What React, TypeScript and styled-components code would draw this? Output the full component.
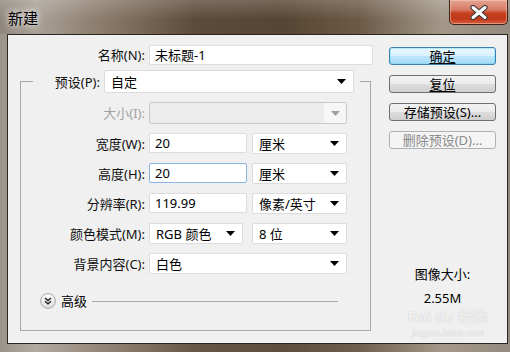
import React from "react";
import styled, { createGlobalStyle, css } from "styled-components";

const GlobalStyle = createGlobalStyle`
  html, body { margin: 0; padding: 0; }
  body {
    width: 510px;
    height: 352px;
    overflow: hidden;
    background: #5e4d3c;
    font-family: "Noto Sans", "Noto Sans CJK SC", sans-serif;
    font-size: 13px;
    color: #000;
  }
`;

const Window = styled.div`
  width: 514px;
  height: 352px;
  display: flex;
  flex-direction: column;
  background:
    linear-gradient(180deg, rgba(255,255,255,0.18) 0px, rgba(255,255,255,0) 20px),
    linear-gradient(90deg, #8f877d 0%, #a9a197 7%, #8a7b6a 20%, #5d4b3a 38%, #574533 55%, #6c5a47 70%, #a39888 86%, #948a7e 100%);
`;

const TitleBar = styled.div`
  height: 34px;
  flex: none;
  display: flex;
  align-items: flex-start;
`;

const Title = styled.div`
  padding: 9px 0 0 8px;
  font-size: 15px;
  line-height: 18px;
  color: #000;
  text-shadow: 0 0 6px rgba(255, 255, 255, 0.85), 0 0 10px rgba(255, 255, 255, 0.6);
`;

const CloseButton = styled.div`
  margin-left: auto;
  margin-right: 6px;
  width: 59px;
  height: 25px;
  box-sizing: border-box;
  border: 1px solid #3f2118;
  border-top: none;
  border-radius: 0 0 5px 5px;
  background: linear-gradient(180deg, #e4a393 0%, #d87c66 40%, #c5401f 55%, #c23a1c 80%, #d6603f 100%);
  box-shadow: inset 0 0 0 1px rgba(255, 220, 200, 0.45);
  display: flex;
  align-items: center;
  justify-content: center;
`;

const Frame = styled.div`
  flex: 1;
  display: flex;
  padding: 0 6px 8px 7px;
  background: linear-gradient(90deg, rgba(255,255,255,0.1), rgba(0,0,0,0));
`;

const Client = styled.div`
  flex: 1;
  position: relative;
  display: flex;
  border: 1px solid #2c2622;
  background: #f0f0f0;
  padding-top: 10px;
`;

const FormColumn = styled.div`
  display: flex;
  flex-direction: column;
`;

const NameRow = styled.div`
  display: flex;
  align-items: center;
  gap: 4px;
`;

const Label = styled.label<{ $width?: number; $disabled?: boolean }>`
  ${(p) => p.$width && css`width: ${p.$width}px;`}
  text-align: right;
  white-space: nowrap;
  line-height: 16px;
  color: ${(p) => (p.$disabled ? "#a3a3a3" : "#111")};
`;

const TextBox = styled.div<{ $width: number; $focused?: boolean }>`
  width: ${(p) => p.$width}px;
  height: 20px;
  box-sizing: border-box;
  background: #fff;
  border: 1px solid ${(p) => (p.$focused ? "#86b6e3" : "#dcdcdc")};
  border-radius: 2px;
  padding-left: 5px;
  display: flex;
  align-items: center;
  line-height: 16px;
`;

const Select = styled.div<{ $width: number; $height?: number; $disabled?: boolean }>`
  width: ${(p) => p.$width}px;
  height: ${(p) => p.$height ?? 20}px;
  box-sizing: border-box;
  background: ${(p) => (p.$disabled ? "#ececec" : "#fff")};
  border: 1px solid ${(p) => (p.$disabled ? "#c9c9c9" : "#dcdcdc")};
  border-radius: 2px;
  padding-left: 6px;
  display: flex;
  align-items: center;
  line-height: 16px;
  overflow: hidden;
`;

const SelectText = styled.span`
  flex: 1;
  white-space: nowrap;
`;

const ArrowCell = styled.span<{ $disabled?: boolean }>`
  align-self: stretch;
  display: flex;
  align-items: center;
  justify-content: center;
  width: ${(p) => (p.$disabled ? "22px" : "15px")};
  padding-right: ${(p) => (p.$disabled ? "0" : "4px")};
  background: ${(p) => (p.$disabled ? "#f6f6f6" : "transparent")};
`;

const Group = styled.fieldset`
  margin: 5px 0 0 12px;
  width: 351px;
  box-sizing: border-box;
  border: 1px solid #a8a8a8;
  padding: 9px 0 21px 0;
  min-width: 0;
`;

const Legend = styled.legend`
  margin-left: 12px;
  padding: 0 6px 0 0;
  display: flex;
  align-items: center;
  gap: 4px;
`;

const FieldGrid = styled.div`
  display: grid;
  grid-template-columns: 124px 198px;
  column-gap: 4px;
  row-gap: 9px;
  align-items: center;
`;

const FieldPair = styled.div`
  display: flex;
  justify-content: space-between;
`;

const AdvancedRow = styled.div`
  display: flex;
  align-items: center;
  margin: 19px 32px 0 19px;
  height: 16px;
`;

const AdvancedText = styled.span`
  margin-left: 5px;
  line-height: 16px;
`;

const Rule = styled.div`
  flex: 1;
  height: 1px;
  margin-left: 5px;
  background: #a8a8a8;
`;

const ButtonColumn = styled.div`
  margin-left: auto;
  margin-right: 11px;
  width: 107px;
  padding-top: 2px;
  display: flex;
  flex-direction: column;
  gap: 10px;
`;

const Button = styled.div<{ $variant?: "default" | "normal" | "disabled" }>`
  height: 18px;
  box-sizing: border-box;
  border-radius: 3px;
  display: flex;
  align-items: center;
  justify-content: center;
  line-height: 16px;
  white-space: nowrap;
  ${(p) =>
    p.$variant === "default"
      ? css`
          border: 1px solid #3c7fb1;
          background: linear-gradient(180deg, #eaf6fd 0%, #d9f0fc 50%, #bee6fd 51%, #a7d9f5 100%);
          box-shadow: inset 0 0 0 1px #48d5fa55;
        `
      : p.$variant === "disabled"
      ? css`
          border: 1px solid #adb2b5;
          background: #f4f4f4;
          color: #8a8a8a;
        `
      : css`
          border: 1px solid #707070;
          background: linear-gradient(180deg, #f2f2f2 0%, #ebebeb 50%, #dddddd 51%, #cfcfcf 100%);
        `}
`;

const Underlined = styled.span`
  text-decoration: underline;
  text-underline-offset: 2px;
`;

const SizeInfo = styled.div`
  margin-top: 107px;
  display: flex;
  flex-direction: column;
  align-items: center;
  gap: 8px;
  line-height: 16px;
`;

const Watermark = styled.div`
  position: absolute;
  left: 400px;
  top: 274px;
  display: flex;
  flex-direction: column;
  align-items: center;
  gap: 3px;
  white-space: nowrap;
  color: rgba(255, 255, 255, 0.8);
  text-shadow: 0 0 1px rgba(110, 110, 110, 0.45);
  pointer-events: none;
`;

const WatermarkLogo = styled.div`
  font-family: "Liberation Sans", "Noto Sans CJK SC", sans-serif;
  font-weight: bold;
  font-size: 15px;
  line-height: 16px;
`;

const WatermarkUrl = styled.div`
  font-family: "Liberation Sans", sans-serif;
  font-size: 9px;
  line-height: 10px;
`;

const Arrow = ({ disabled }: { disabled?: boolean }) => (
  <svg width="9" height="5" viewBox="0 0 9 5">
    <path d="M0 0 H9 L4.5 5 Z" fill={disabled ? "#a0a0a0" : "#000"} />
  </svg>
);

const CloseGlyph = () => (
  <svg width="20" height="15" viewBox="0 0 20 15">
    <path d="M4 2.5 L16 12.5 M16 2.5 L4 12.5" stroke="#3b3b3b" strokeWidth="5.2" strokeLinecap="round" />
    <path d="M4 2.5 L16 12.5 M16 2.5 L4 12.5" stroke="#ffffff" strokeWidth="3" strokeLinecap="round" />
  </svg>
);

const ExpandIcon = () => (
  <svg width="16" height="16" viewBox="0 0 16 16">
    <defs>
      <linearGradient id="expg" x1="0" y1="0" x2="0" y2="1">
        <stop offset="0" stopColor="#ffffff" />
        <stop offset="1" stopColor="#dcdcdc" />
      </linearGradient>
    </defs>
    <circle cx="8" cy="8" r="7.4" fill="url(#expg)" stroke="#a5a5a5" strokeWidth="1" />
    <path d="M5 5 L8 7.5 L11 5 M5 8.3 L8 10.8 L11 8.3" fill="none" stroke="#222" strokeWidth="1.4" />
  </svg>
);

const Dropdown = ({
  width,
  value,
  height,
  disabled,
}: {
  width: number;
  value?: string;
  height?: number;
  disabled?: boolean;
}) => (
  <Select $width={width} $height={height} $disabled={disabled}>
    <SelectText>{value}</SelectText>
    <ArrowCell $disabled={disabled}>
      <Arrow disabled={disabled} />
    </ArrowCell>
  </Select>
);

export default function App() {
  return (
    <>
      <GlobalStyle />
      <Window>
        <TitleBar>
          <Title>新建</Title>
          <CloseButton>
            <CloseGlyph />
          </CloseButton>
        </TitleBar>
        <Frame>
          <Client>
            <FormColumn>
              <NameRow>
                <Label $width={137}>名称(N):</Label>
                <TextBox $width={224}>未标题-1</TextBox>
              </NameRow>
              <Group>
                <Legend>
                  <Label $width={67}>预设(P):</Label>
                  <Dropdown width={250} height={23} value="自定" />
                </Legend>
                <FieldGrid>
                  <Label $disabled>大小(I):</Label>
                  <Dropdown width={198} height={22} disabled />

                  <Label>宽度(W):</Label>
                  <FieldPair>
                    <TextBox $width={98}>20</TextBox>
                    <Dropdown width={95} height={21} value="厘米" />
                  </FieldPair>

                  <Label>高度(H):</Label>
                  <FieldPair>
                    <TextBox $width={98} $focused>20</TextBox>
                    <Dropdown width={95} height={21} value="厘米" />
                  </FieldPair>

                  <Label>分辨率(R):</Label>
                  <FieldPair>
                    <TextBox $width={98}>119.99</TextBox>
                    <Dropdown width={95} height={21} value="像素/英寸" />
                  </FieldPair>

                  <Label>颜色模式(M):</Label>
                  <FieldPair>
                    <Dropdown width={94} height={21} value="RGB 颜色" />
                    <Dropdown width={95} height={21} value="8 位" />
                  </FieldPair>

                  <Label>背景内容(C):</Label>
                  <Dropdown width={198} height={21} value="白色" />
                </FieldGrid>
                <AdvancedRow>
                  <ExpandIcon />
                  <AdvancedText>高级</AdvancedText>
                  <Rule />
                </AdvancedRow>
              </Group>
            </FormColumn>
            <ButtonColumn>
              <Button $variant="default">
                <Underlined>确定</Underlined>
              </Button>
              <Button>
                <Underlined>复位</Underlined>
              </Button>
              <Button>存储预设(S)...</Button>
              <Button $variant="disabled">删除预设(D)...</Button>
              <SizeInfo>
                <span>图像大小:</span>
                <span>2.55M</span>
              </SizeInfo>
            </ButtonColumn>
            <Watermark>
              <WatermarkLogo>Bai du 经验</WatermarkLogo>
              <WatermarkUrl>jingyan.baidu.com</WatermarkUrl>
            </Watermark>
          </Client>
        </Frame>
      </Window>
    </>
  );
}
